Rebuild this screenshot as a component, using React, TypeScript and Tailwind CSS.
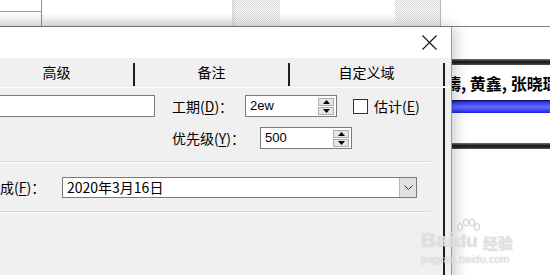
import React from 'react'

const ui = { fontFamily: '"Noto Sans CJK SC", "Liberation Sans", sans-serif' }
const latin = { fontFamily: '"Liberation Sans", "Noto Sans CJK SC", sans-serif' }

function Key({ k }: { k: string }) {
  return (
    <span>
      (<span className="underline underline-offset-2">{k}</span>)：
    </span>
  )
}

function Spin({ value, width }: { value: string; width: string }) {
  return (
    <div className={`flex h-[22px] ${width} items-center border border-[#7a7a7a] bg-white pl-[4px] pr-[2px]`}>
      <span className="flex-1 text-[13px] text-black" style={latin}>{value}</span>
      <div className="flex flex-col gap-[1px]">
        <div className="flex h-[8px] w-[16px] items-center justify-center border border-[#adadad] bg-[#e5e5e5]">
          <svg width="7" height="4" viewBox="0 0 7 4"><polygon points="3.5,0 7,4 0,4" fill="#000" /></svg>
        </div>
        <div className="flex h-[8px] w-[16px] items-center justify-center border border-[#adadad] bg-[#e5e5e5]">
          <svg width="7" height="4" viewBox="0 0 7 4"><polygon points="0,0 7,0 3.5,4" fill="#000" /></svg>
        </div>
      </div>
    </div>
  )
}

function Sep() {
  return (
    <div className="mr-[13px] flex flex-col">
      <div className="h-px bg-[#d6d6d6]" />
      <div className="h-px bg-white" />
    </div>
  )
}

export default function App() {
  return (
    <div className="relative h-[275px] w-[550px] overflow-hidden bg-white" style={ui}>
      {/* background window */}
      <div className="flex h-[27px] border-b border-[#808080]">
        <div className="flex w-[42px] flex-col border-r border-[#8c8c8c]">
          <div className="h-[12px] border-b border-[#a0a0a0]" />
          <div className="flex-1 bg-gradient-to-b from-white to-[#ececec]" />
        </div>
        <div className="w-[190px] bg-gradient-to-b from-white from-50% to-[#e6e6e6]" />
        <div className="w-[3px] bg-[#dcdcdc]" />
        <div className="w-[45px] bg-[repeating-conic-gradient(#d4d4d4_0_25%,#fcfcfc_0_50%)] bg-[length:2px_2px]" />
        <div className="w-[115px] bg-gradient-to-b from-white from-50% to-[#ececec]" />
        <div className="w-[45px] bg-[repeating-conic-gradient(#d4d4d4_0_25%,#fcfcfc_0_50%)] bg-[length:2px_2px]" />
        <div className="w-px bg-[#b8b8b8]" />
        <div className="flex-1 bg-white" />
      </div>
      <div className="flex flex-col">
        <div className="h-[32px]" />
        <div className="h-[6px] bg-gradient-to-b from-[#777] via-[#111] to-[#555]" />
        <div className="flex h-[35px] items-center whitespace-nowrap pl-[445px] text-[16px] font-bold text-black">
          儔, 黄鑫, 张晓璐
        </div>
        <div className="h-[13px] border-t border-[#101060] bg-gradient-to-b from-[#2020e0] via-[#6a6aff] to-[#1a1ae8]" />
        <div className="h-[30px]" />
        <div className="h-[6px] bg-gradient-to-b from-[#777] via-[#111] to-[#555]" />
      </div>

      {/* dialog */}
      <div className="absolute left-[-20px] top-[27px] flex h-[260px] w-[472px] flex-col border-r border-[#9a9a9a] bg-[#f0f0f0] shadow-[3px_0_14px_rgba(0,0,0,0.22)]">
        <div className="flex h-[31px] items-center justify-end bg-white pr-[14px]">
          <svg width="15" height="15" viewBox="0 0 15 15">
            <path d="M0.5 0.5 L14.5 14.5 M14.5 0.5 L0.5 14.5" stroke="#111" strokeWidth="1.1" />
          </svg>
        </div>
        <div className="flex h-[30px] border-b border-white bg-[#f0f0f0] text-[14px] text-black">
          {['高级', '备注', '自定义域'].map((t) => (
            <div key={t} className="flex w-[155px]">
              <div className="flex flex-1 items-center justify-center">{t}</div>
              <div className="mb-[1px] mt-[5px] w-[2px] bg-[#1e1e1e]" />
            </div>
          ))}
        </div>
        <div className="flex flex-1">
          <div className="flex w-[465px] flex-col border-r-2 border-[#1e1e1e] pt-[7px] text-[14px] text-black">
            <div className="flex h-[22px] items-center">
              <div className="ml-[10px] h-[22px] w-[165px] border border-[#7a7a7a] bg-white" />
              <div className="ml-[17px] w-[73px] whitespace-nowrap">
                工期<Key k="D" />
              </div>
              <Spin value="2ew" width="w-[92px]" />
              <div className="ml-[16px] h-[15px] w-[15px] border border-[#333] bg-white" />
              <div className="ml-[6px] whitespace-nowrap">
                估计(<span className="underline underline-offset-2">E</span>)
              </div>
            </div>
            <div className="mt-[10px] flex h-[22px] items-center">
              <div className="ml-[192px] w-[88px] whitespace-nowrap">
                优先级<Key k="Y" />
              </div>
              <Spin value="500" width="w-[92px]" />
            </div>
            <div className="mt-[12px]">
              <Sep />
            </div>
            <div className="mt-[14px] flex h-[21px] items-center">
              <div className="ml-[20px] w-[62px] whitespace-nowrap">
                成<Key k="F" />
              </div>
              <div className="flex h-[21px] w-[355px] items-center border border-[#7a7a7a] bg-white">
                <span className="flex-1 pl-[4px] text-[14px]">2020年3月16日</span>
                <div className="flex h-full w-[17px] items-center justify-center border-l border-[#b8b8b8] bg-[#e1e1e1]">
                  <svg width="9" height="5" viewBox="0 0 9 5">
                    <path d="M0.5 0.5 L4.5 4.5 L8.5 0.5" stroke="#333" strokeWidth="1" fill="none" />
                  </svg>
                </div>
              </div>
            </div>
            <div className="mt-[13px]">
              <Sep />
            </div>
          </div>
        </div>
      </div>

      {/* watermark */}
      <div className="absolute left-[421px] top-[229px] flex flex-col items-start whitespace-nowrap leading-none text-white/60 [text-shadow:0_0_1px_#b0b0b0]">
        <div className="flex items-end gap-[1px] whitespace-nowrap">
          <span className="text-[21px] font-bold" style={latin}>Bai</span>
          <span className="relative text-[19px] font-bold" style={latin}>
            du
            <svg className="absolute -top-[13px] left-[1px]" width="24" height="14" viewBox="0 0 24 14">
              <g fill="none" stroke="#c8c8c8" strokeWidth="1">
                <ellipse cx="4" cy="9" rx="2.5" ry="3.5" />
                <ellipse cx="10" cy="4.5" rx="2.5" ry="3.5" />
                <ellipse cx="16" cy="4.5" rx="2.5" ry="3.5" />
                <ellipse cx="21" cy="9" rx="2.5" ry="3.5" />
              </g>
            </svg>
          </span>
          <span className="ml-[4px] text-[15px] font-bold">经验</span>
        </div>
        <span className="mt-[4px] text-[11px]" style={latin}>jingyan.baidu.com</span>
      </div>
    </div>
  )
}
